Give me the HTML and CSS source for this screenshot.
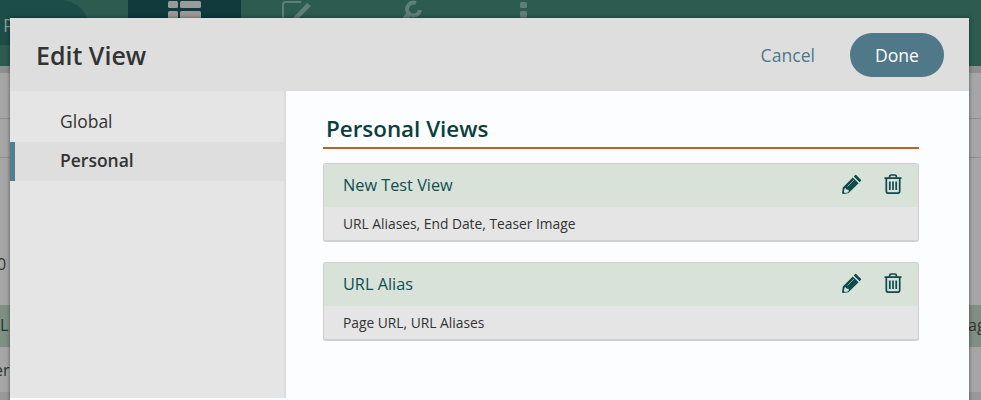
FILE: index.html
```html
<!DOCTYPE html>
<html lang="en">
<head>
<meta charset="utf-8">
<title>Edit View</title>
<link rel="stylesheet" href="styles.css">
</head>
<body>
<div class="backdrop">
  <header class="topbar">
    <div class="brand">P</div>
    <div class="tab tab-active">
      <svg width="34" height="20" viewBox="0 0 34 20"><g fill="#9a9a9a"><rect x="0" y="1" width="10" height="7" rx="1.5"/><rect x="12" y="1" width="21" height="7" rx="1.5"/><rect x="0" y="11" width="10" height="8" rx="1.5"/><rect x="12" y="11" width="21" height="8" rx="1.5"/></g></svg>
    </div>
    <div class="tab">
      <svg width="34" height="20" viewBox="0 0 34 20"><path d="M20 2H5a3 3 0 0 0-3 3v15" fill="none" stroke="#5f7f77" stroke-width="2"/><path d="M11 19 26 3l4 3-15 15z" fill="#5f7f77"/></svg>
    </div>
    <div class="tab">
      <svg width="24" height="20" viewBox="0 0 24 20"><path d="M17 3a6.500 6.500 0 1 0 4 7" fill="none" stroke="#5f7f77" stroke-width="4"/><path d="M11 13 4 21" fill="none" stroke="#5f7f77" stroke-width="5"/></svg>
    </div>
    <div class="tab">
      <svg width="8" height="20" viewBox="0 0 8 20"><g fill="#5f7f77"><rect x="0" y="2" width="7" height="6" rx="1.5"/><rect x="0" y="11" width="7" height="7" rx="1.5"/></g></svg>
    </div>
  </header>
  <div class="subbar"></div>
  <div class="bg-rows">
    <div class="bg-row bg-h1"></div>
    <div class="bg-row bg-h2"></div>
    <div class="bg-row bg-h3"><span class="bg-zero">0</span></div>
    <div class="bg-row bg-h4"><span class="bg-label">L</span><span class="bg-right">ag</span></div>
    <div class="bg-row bg-h5"><span class="bg-er">er</span></div>
    <div class="bg-row bg-h6"></div>
  </div>
</div>

<section class="modal">
  <div class="modal-head">
    <h1 class="modal-title">Edit View</h1>
    <div class="modal-actions">
      <a class="cancel">Cancel</a>
      <button class="done" type="button">Done</button>
    </div>
  </div>
  <div class="modal-body">
    <nav class="side">
      <div class="side-item">Global</div>
      <div class="side-item side-active">Personal</div>
    </nav>
    <main class="content">
      <h2 class="section-title">Personal Views</h2>
      <article class="card">
        <div class="card-head">
          <span class="card-name">New Test View</span>
          <span class="card-icons">
            <svg class="icon-pencil" width="20" height="20" viewBox="0 0 20 20"><path fill="#0f4a4c" d="M14.2 1.1 18.9 5.800a.8.8 0 0 1 0 1.100L17.600 8.200 11.800 2.400 13.100 1.100a.8.8 0 0 1 1.100 0zM10.800 3.400 16.600 9.200 6.400 19.200.8 20 .0 19.200 .8 13.600zM3.300 14.100l-.9 .9-.5 2.900 .0 .2 1.100 1 2.900-.6 .9-.9-.2-1.800-1.800-.1z"/><path d="M5.500 12.500 12 6" stroke="#d8e2d9" stroke-width=".6"/></svg>
            <svg class="icon-trash" width="18" height="20" viewBox="0 0 18 20"><path fill="none" stroke="#0f4a4c" stroke-width="1.700" d="M.5 4.200H17.500M5.600 4V2.600A1.700 1.700 0 0 1 7.300 1H10.700A1.700 1.700 0 0 1 12.400 2.600V4M2.300 4.200V17.200A2 2 0 0 0 4.300 19.200H13.700A2 2 0 0 0 15.700 17.200V4.200"/><path fill="none" stroke="#0f4a4c" stroke-width="1.700" d="M5.800 7.500V16M9 7.500V16M12.200 7.500V16"/></svg>
          </span>
        </div>
        <div class="card-desc">URL Aliases, End Date, Teaser Image</div>
      </article>
      <article class="card">
        <div class="card-head">
          <span class="card-name">URL Alias</span>
          <span class="card-icons">
            <svg class="icon-pencil" width="20" height="20" viewBox="0 0 20 20"><path fill="#0f4a4c" d="M14.2 1.1 18.9 5.800a.8.8 0 0 1 0 1.100L17.600 8.200 11.800 2.400 13.100 1.100a.8.8 0 0 1 1.100 0zM10.800 3.400 16.600 9.200 6.400 19.200.8 20 .0 19.200 .8 13.600zM3.300 14.100l-.9 .9-.5 2.900 .0 .2 1.100 1 2.900-.6 .9-.9-.2-1.800-1.800-.1z"/><path d="M5.500 12.500 12 6" stroke="#d8e2d9" stroke-width=".6"/></svg>
            <svg class="icon-trash" width="18" height="20" viewBox="0 0 18 20"><path fill="none" stroke="#0f4a4c" stroke-width="1.700" d="M.5 4.200H17.500M5.600 4V2.600A1.700 1.700 0 0 1 7.300 1H10.700A1.700 1.700 0 0 1 12.400 2.600V4M2.300 4.200V17.200A2 2 0 0 0 4.300 19.200H13.700A2 2 0 0 0 15.700 17.200V4.200"/><path fill="none" stroke="#0f4a4c" stroke-width="1.700" d="M5.800 7.500V16M9 7.500V16M12.200 7.500V16"/></svg>
          </span>
        </div>
        <div class="card-desc">Page URL, URL Aliases</div>
      </article>
    </main>
  </div>
</section>
</body>
</html>
```
FILE: styles.css
```css
* { box-sizing: border-box; }
html, body { margin: 0; height: 400px; overflow: hidden; }
body { position: relative; font-family: "Open Sans", "Noto Sans", sans-serif; background: #a6a6a6; color: #333; }

.backdrop { height: 400px; overflow: hidden; }
.topbar { height: 66px; background: #2c5b50; display: flex; position: relative; }
.brand { width: 90px; height: 45px; background: #1c4d48; border-top-right-radius: 30px; color: #8a9a96; font-size: 18px; padding: 13px 0 0 3px; }
.tab { width: 113px; height: 45px; display: flex; justify-content: center; }
.tab-active { background: #0f3b3c; margin-left: 38px; }
.subbar { height: 7px; background: #8f8f8f; }
.bg-row { position: relative; border-bottom: 1px solid #8e8e8e; }
.bg-h1 { height: 46px; }
.bg-h2 { height: 39px; }
.bg-h3 { height: 147px; border-bottom: 0; }
.bg-h4 { height: 42px; background: #7f8f83; border-bottom: 0; }
.bg-h5 { height: 45px; border-bottom: 0; }
.bg-h6 { height: 8px; background: #999; border-bottom: 0; }
.bg-zero { position: absolute; left: -3px; top: 95px; font-size: 16px; color: #333; }
.bg-er { position: absolute; left: -6px; top: 12px; font-size: 16px; color: #333; }
.bg-label { position: absolute; left: 0; top: 9px; font-size: 16px; color: #0b3f3e; }
.bg-right { position: absolute; left: 968px; top: 9px; font-size: 16px; color: #333; }

.modal { position: absolute; left: 10px; top: 18px; width: 959px; height: 400px; box-shadow: 0 0 4px rgba(0,0,0,.5); background: #fcfdff; }
.modal-head { height: 73px; background: #dedede; display: flex; align-items: center; justify-content: space-between; padding: 0 25px 0 26px; }
.modal-title { margin: 0; font-size: 25px; font-weight: 600; color: #333; }
.modal-actions { display: flex; align-items: center; gap: 35px; }
.cancel { font-size: 17.600px; color: #4f7888; }
.done { width: 94px; height: 44px; border: 0; border-radius: 22px; background: #4f7888; color: #fff; font: 17.600px "Open Sans", sans-serif; padding: 0; }
.modal-body { display: flex; height: 307px; }
.side { width: 276px; background: #e5e5e5; border-right: 2px solid #dcdcdc; padding-top: 12px; }
.side-item { height: 39px; line-height: 37px; padding-left: 50px; font-size: 17.500px; color: #333; }
.side-active { background: #dedede; font-weight: 600; border-left: 5px solid #4f7f90; padding-left: 45px; }
.content { flex: 1; padding: 20px 50px 0 37px; }
.section-title { margin: 0 0 14px; height: 38px; padding-left: 3px; font-size: 22.400px; line-height: 36px; font-weight: 600; color: #0b3f3e; border-bottom: 2px solid #b5652b; }
.card { height: 79px; margin-bottom: 20px; border: 1px solid #d0d0d0; border-bottom-width: 2px; border-radius: 3px; background: #e5e5e5; overflow: hidden; }
.card-head { height: 43px; background: #d8e2d9; display: flex; align-items: center; justify-content: space-between; padding: 0 16px 2px 19px; }
.card-name { font-size: 16.300px; color: #0f4f50; }
.card-icons { display: flex; align-items: center; gap: 22px; margin-top: -2px; }
.card-desc { font-size: 13.800px; line-height: 33px; padding-left: 19px; color: #333; }
```
